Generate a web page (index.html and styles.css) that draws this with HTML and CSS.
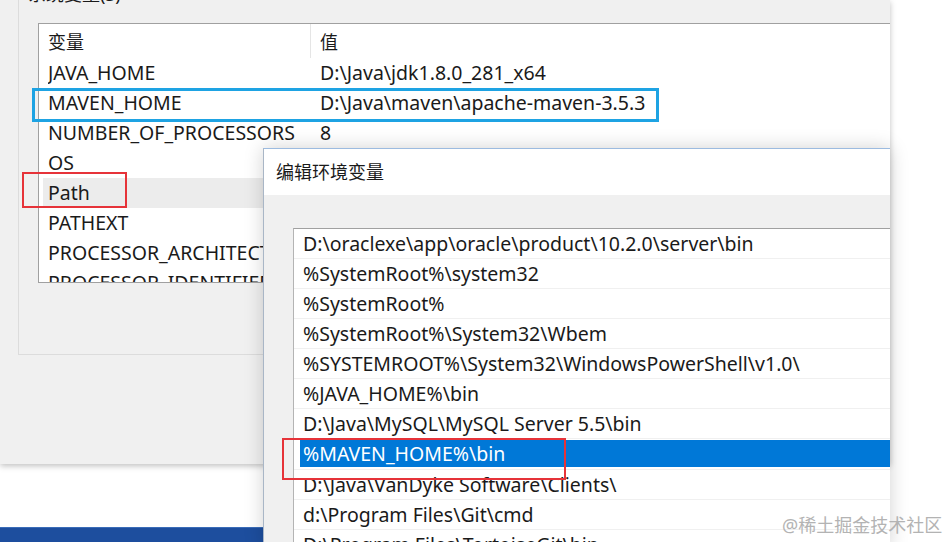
FILE: index.html
```html
<!DOCTYPE html>
<html>
<head>
  <meta charset="utf-8">
  <title>编辑环境变量</title>
  <link rel="stylesheet" href="styles.css">
</head>
<body>
  <div class="screen">

    <div class="window sys-window">
      <div class="group">
        <div class="group-title zh">系统变量(S)</div>
        <div class="var-list">
          <div class="var-head zh">
            <span class="col-name">变量</span>
            <span class="col-value">值</span>
          </div>
          <div class="var-row"><span class="col-name">JAVA_HOME</span><span class="col-value">D:\Java\jdk1.8.0_281_x64</span></div>
          <div class="var-row"><span class="col-name">MAVEN_HOME</span><span class="col-value">D:\Java\maven\apache-maven-3.5.3</span></div>
          <div class="var-row"><span class="col-name">NUMBER_OF_PROCESSORS</span><span class="col-value">8</span></div>
          <div class="var-row"><span class="col-name">OS</span><span class="col-value"></span></div>
          <div class="var-row current"><span class="col-name">Path</span><span class="col-value"></span></div>
          <div class="var-row"><span class="col-name">PATHEXT</span><span class="col-value"></span></div>
          <div class="var-row"><span class="col-name">PROCESSOR_ARCHITECTURE</span><span class="col-value"></span></div>
          <div class="var-row"><span class="col-name">PROCESSOR_IDENTIFIER</span><span class="col-value"></span></div>
        </div>
      </div>
    </div>

    <div class="taskbar"></div>

    <div class="window edit-window">
      <div class="edit-title zh">编辑环境变量</div>
      <div class="edit-body">
        <div class="path-list">
          <div class="path-row">D:\oraclexe\app\oracle\product\10.2.0\server\bin</div>
          <div class="path-row">%SystemRoot%\system32</div>
          <div class="path-row">%SystemRoot%</div>
          <div class="path-row">%SystemRoot%\System32\Wbem</div>
          <div class="path-row">%SYSTEMROOT%\System32\WindowsPowerShell\v1.0\</div>
          <div class="path-row">%JAVA_HOME%\bin</div>
          <div class="path-row">D:\Java\MySQL\MySQL Server 5.5\bin</div>
          <div class="path-row editing"><span class="selected-text">%MAVEN_HOME%\bin</span></div>
          <div class="path-row">D:\Java\VanDyke Software\Clients\</div>
          <div class="path-row">d:\Program Files\Git\cmd</div>
          <div class="path-row">D:\Program Files\TortoiseGit\bin</div>
        </div>
      </div>
    </div>

    <!-- annotation boxes drawn over the screenshot -->
    <div class="mark mark-blue"></div>
    <div class="mark mark-red mark-path"></div>
    <div class="mark mark-red mark-maven"></div>

    <div class="watermark">@稀土掘金技术社区</div>
  </div>
</body>
</html>
```

FILE: styles.css
```css
body {
  margin: 0;
  background-color: #fff;
  font-family: "Noto Sans", "Noto Sans CJK SC", sans-serif;
  font-size: 19.5px;
  color: #1a1a1a;
}

.screen {
  position: relative;
  width: 948px;
  height: 542px;
  overflow: hidden;
  background-color: #fff;
}

.zh {
  font-size: 18px;
}

.window {
  position: absolute;
  box-sizing: border-box;
  background-color: #f0f0f0;
}

/* system variables window */
.sys-window {
  left: 0;
  top: 0;
  width: 890px;
  height: 464px;
  box-shadow: 0 2px 6px rgba(0, 0, 0, 0.25);
}

.group {
  box-sizing: border-box;
  height: 373px;
  margin-left: 18px;
  border-left: 1px solid #dcdcdc;
  border-bottom: 1px solid #dcdcdc;
}

.group-title {
  margin: -18px 0 0 9px;
  line-height: 24px;
}

.var-list {
  box-sizing: border-box;
  height: 260px;
  margin: 17px 0 0 19px;
  background-color: #fff;
  border: 1px solid #a0a0a0;
  border-right: none;
  overflow: hidden;
}

.var-head,
.var-row {
  display: flex;
  white-space: nowrap;
}

.var-head {
  height: 34px;
  line-height: 36px;
  padding-left: 9px;
}

.var-row {
  height: 30px;
  line-height: 30px;
  margin-left: 4px;
  padding-left: 5px;
}

.var-row.current {
  background-color: #ececec;
}

.col-name {
  width: 262px;
  flex: none;
  overflow: hidden;
}

.col-value {
  padding-left: 10px;
}

.var-head .col-value {
  border-left: 1px solid #e5e5e5;
  padding-left: 9px;
}

.taskbar {
  position: absolute;
  left: 0;
  bottom: 0;
  box-sizing: border-box;
  width: 263px;
  height: 15px;
  background-color: #1d4e9e;
  border-top: 1px solid #3a6cb8;
}

/* edit path window */
.edit-window {
  left: 263px;
  top: 148px;
  width: 627px;
  height: 400px;
  border-top: 1px solid #9cbbe0;
  border-left: 1px solid #a9b6c6;
  box-shadow: 0 0 18px rgba(0, 0, 0, 0.18);
}

.edit-title {
  height: 46px;
  line-height: 46px;
  padding-left: 12px;
  background-color: #fff;
}

.edit-body {
  padding: 33px 0 0 29px;
}

.path-list {
  background-color: #fff;
  border-top: 1px solid #a0a0a0;
  border-left: 1px solid #b4b4b4;
  height: 320px;
  overflow: hidden;
}

.path-row {
  height: 29px;
  line-height: 29px;
  padding-left: 9px;
  border-bottom: 1px solid #f0f0f0;
  white-space: nowrap;
}

.path-row.editing {
  padding-left: 6px;
}

.selected-text {
  display: block;
  height: 27px;
  line-height: 27px;
  margin-top: 1px;
  padding-left: 3px;
  background-color: #0078d7;
  color: #fff;
}

/* annotations */
.mark {
  position: absolute;
  box-sizing: border-box;
}

.mark-blue {
  left: 32px;
  top: 88px;
  width: 627px;
  height: 34px;
  border: 3px solid #1ea3e3;
}

.mark-red {
  border: 2px solid #e63339;
}

.mark-path {
  left: 22px;
  top: 172px;
  width: 105px;
  height: 36px;
}

.mark-maven {
  left: 282px;
  top: 438px;
  width: 284px;
  height: 42px;
}

.watermark {
  position: absolute;
  left: 782px;
  top: 513px;
  font-size: 18px;
  line-height: 24px;
  color: #b3b3b3;
}
```
